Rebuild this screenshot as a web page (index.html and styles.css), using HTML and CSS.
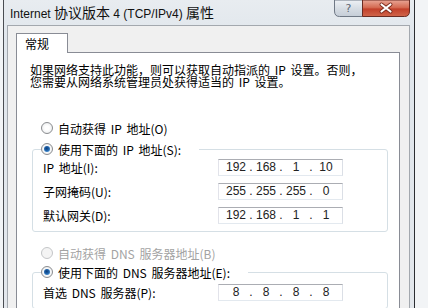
FILE: index.html
```html
<!DOCTYPE html>
<html lang="zh-CN">
  <head>
    <meta charset="UTF-8" />
    <title>Internet 协议版本 4 (TCP/IPv4) 属性</title>
    <link rel="stylesheet" href="styles.css">
  </head>
  <body>
    <main class="window">
      <header class="titlebar">
        <span class="title">Internet <span class="zh">协议版本</span> 4 (TCP/IPv4) <span class="zh">属性</span></span>
        <svg class="caption-buttons" width="76" height="17" viewBox="0 0 76 17">
          <defs>
            <linearGradient id="helpFill" x1="0" y1="0" x2="0" y2="1">
              <stop offset="0" stop-color="#eef1f5" />
              <stop offset="0.5" stop-color="#d7dde4" />
              <stop offset="1" stop-color="#c5cdd7" />
            </linearGradient>
            <linearGradient id="closeFill" x1="0" y1="0" x2="0" y2="1">
              <stop offset="0" stop-color="#e9a797" />
              <stop offset="0.45" stop-color="#d56b53" />
              <stop offset="0.55" stop-color="#c2402a" />
              <stop offset="1" stop-color="#d0664b" />
            </linearGradient>
          </defs>
          <path d="M0.5 0 V11 Q0.5 16.5 5.5 16.5 H28.5 V0 Z" fill="url(#helpFill)" stroke="#6f7885" />
          <path d="M28.5 0 V16.5 H70.5 Q75.5 16.5 75.5 11 V0 Z" fill="url(#closeFill)" stroke="#6a2b22" />
          <text x="14.5" y="12" text-anchor="middle" font-family="DejaVu Sans" font-size="11" fill="#5b6572">?</text>
          <path d="M47.5 4.5 L56.5 11.5 M56.5 4.5 L47.5 11.5" stroke="#7a2a1c" stroke-width="4" stroke-linecap="round" />
          <path d="M47.5 4.5 L56.5 11.5 M56.5 4.5 L47.5 11.5" stroke="#fff" stroke-width="2.2" stroke-linecap="round" />
        </svg>
      </header>
      <section class="client">
        <div class="tabs">
          <div class="tab">常规</div>
        </div>
        <div class="panel">
          <p class="desc">如果网络支持此功能，则可以获取自动指派的 IP 设置。否则，<br>您需要从网络系统管理员处获得适当的 IP 设置。</p>

          <div class="option first"><span class="radio"></span>自动获得 IP 地址(O)</div>
          <fieldset class="group">
            <legend class="option"><span class="radio checked"></span>使用下面的 IP 地址(S):</legend>
            <div class="row">
              <label>IP 地址(I):</label>
              <div class="ipbox"><span>192</span><i>.</i><span>168</span><i>.</i><span>1</span><i>.</i><span>10</span></div>
            </div>
            <div class="row">
              <label>子网掩码(U):</label>
              <div class="ipbox"><span>255</span><i>.</i><span>255</span><i>.</i><span>255</span><i>.</i><span>0</span></div>
            </div>
            <div class="row">
              <label>默认网关(D):</label>
              <div class="ipbox"><span>192</span><i>.</i><span>168</span><i>.</i><span>1</span><i>.</i><span>1</span></div>
            </div>
          </fieldset>

          <div class="option disabled dns"><span class="radio"></span>自动获得 DNS 服务器地址(B)</div>
          <fieldset class="group dns-group">
            <legend class="option"><span class="radio checked"></span>使用下面的 DNS 服务器地址(E):</legend>
            <div class="row">
              <label>首选 DNS 服务器(P):</label>
              <div class="ipbox"><span>8</span><i>.</i><span>8</span><i>.</i><span>8</span><i>.</i><span>8</span></div>
            </div>
          </fieldset>
        </div>
      </section>
    </main>
  </body>
</html>
```

FILE: styles.css
```css
* {
  box-sizing: border-box;
}

body {
  margin: 0;
  width: 428px;
  height: 308px;
  overflow: hidden;
  background-color: #f2f4f6;
  font-family: "Noto Sans CJK SC", sans-serif;
  font-size: 12px;
  word-spacing: 2px;
  color: #000;
}

.window {
  margin-left: 3px;
  width: 412px;
  height: 308px;
  border-left: 1px solid #4a4d52;
  border-right: 1px solid #2b2d31;
  background: linear-gradient(to bottom, #e8ecf0, #e0e6ec 40px, #e3e7ec);
}

.titlebar {
  height: 25px;
  display: flex;
  justify-content: space-between;
  align-items: flex-start;
  padding-left: 6px;
}

.title {
  font-family: "Liberation Sans", "Noto Sans CJK SC", sans-serif;
  font-size: 12px;
  line-height: 24px;
  word-spacing: 0;
  color: #111;
}

.title .zh {
  font-family: "Noto Sans CJK SC", sans-serif;
  font-size: 14px;
}

.caption-buttons {
  display: block;
  margin-right: 4px;
}

.client {
  margin: 0 4px 0 3px;
  height: 283px;
  border: 1px solid #a3a8ae;
  border-bottom: 0;
  background-color: #f0f0f0;
  padding: 7px 9px 0 8px;
}

.tab {
  position: relative;
  z-index: 1;
  width: 52px;
  height: 20px;
  margin-bottom: -1px;
  padding-left: 8px;
  border: 1px solid #898c95;
  border-bottom: 0;
  background-color: #fff;
  line-height: 19px;
}

.panel {
  height: 256px;
  overflow: hidden;
  border: 1px solid #898c95;
  border-bottom: 0;
  background-color: #fff;
  padding-top: 11px;
}

.desc {
  margin: 0 0 0 13px;
  line-height: 12px;
  white-space: nowrap;
}

.option {
  display: flex;
  align-items: center;
  height: 16px;
  gap: 5px;
  white-space: nowrap;
}

.option.first {
  margin: 32px 0 0 24px;
}

.option.dns {
  margin: 13px 0 0 24px;
}

.option.disabled {
  color: #a3a3a3;
}

.radio {
  width: 12px;
  height: 12px;
  border-radius: 50%;
  border: 1px solid #8a8c8f;
  background: radial-gradient(circle, #ffffff 30%, #e4e6e8 100%);
  display: flex;
  justify-content: center;
  align-items: center;
}

.radio.checked::after {
  content: "";
  width: 6px;
  height: 6px;
  border-radius: 50%;
  background: radial-gradient(circle at 45% 40%, #0c3e78 0, #1d5ea6 40%, #5fb0ec 100%);
}

.option.disabled .radio {
  border-color: #c4c6c8;
  background: #f4f4f4;
}

.group {
  margin: 5px 11px 0 15px;
  min-width: 0;
  padding: 0 0 7px 10px;
  border: 1px solid #d5dfe5;
  border-radius: 3px;
}

.dns-group {
  margin-top: 3px;
}

.group legend {
  margin-left: -2px;
  padding: 0 18px 0 0;
}

.row {
  display: flex;
  align-items: center;
  height: 17px;
  margin-top: 7px;
}

.group legend + .row {
  margin-top: 2px;
}

.dns-group legend + .row {
  margin-top: 4px;
}

.row label {
  width: 175px;
  white-space: nowrap;
}

.ipbox {
  display: flex;
  width: 125px;
  height: 17px;
  padding-left: 4px;
  border: 1px solid;
  border-color: #abadb3 #dbdfe6 #e3e9ef #e2e3ea;
  font-family: "Liberation Sans", sans-serif;
  font-size: 12px;
  line-height: 15px;
  word-spacing: 0;
  color: #222;
}

.ipbox span {
  width: 26px;
  text-align: center;
}

.ipbox i {
  width: 4px;
  font-style: normal;
  text-align: center;
}
```
